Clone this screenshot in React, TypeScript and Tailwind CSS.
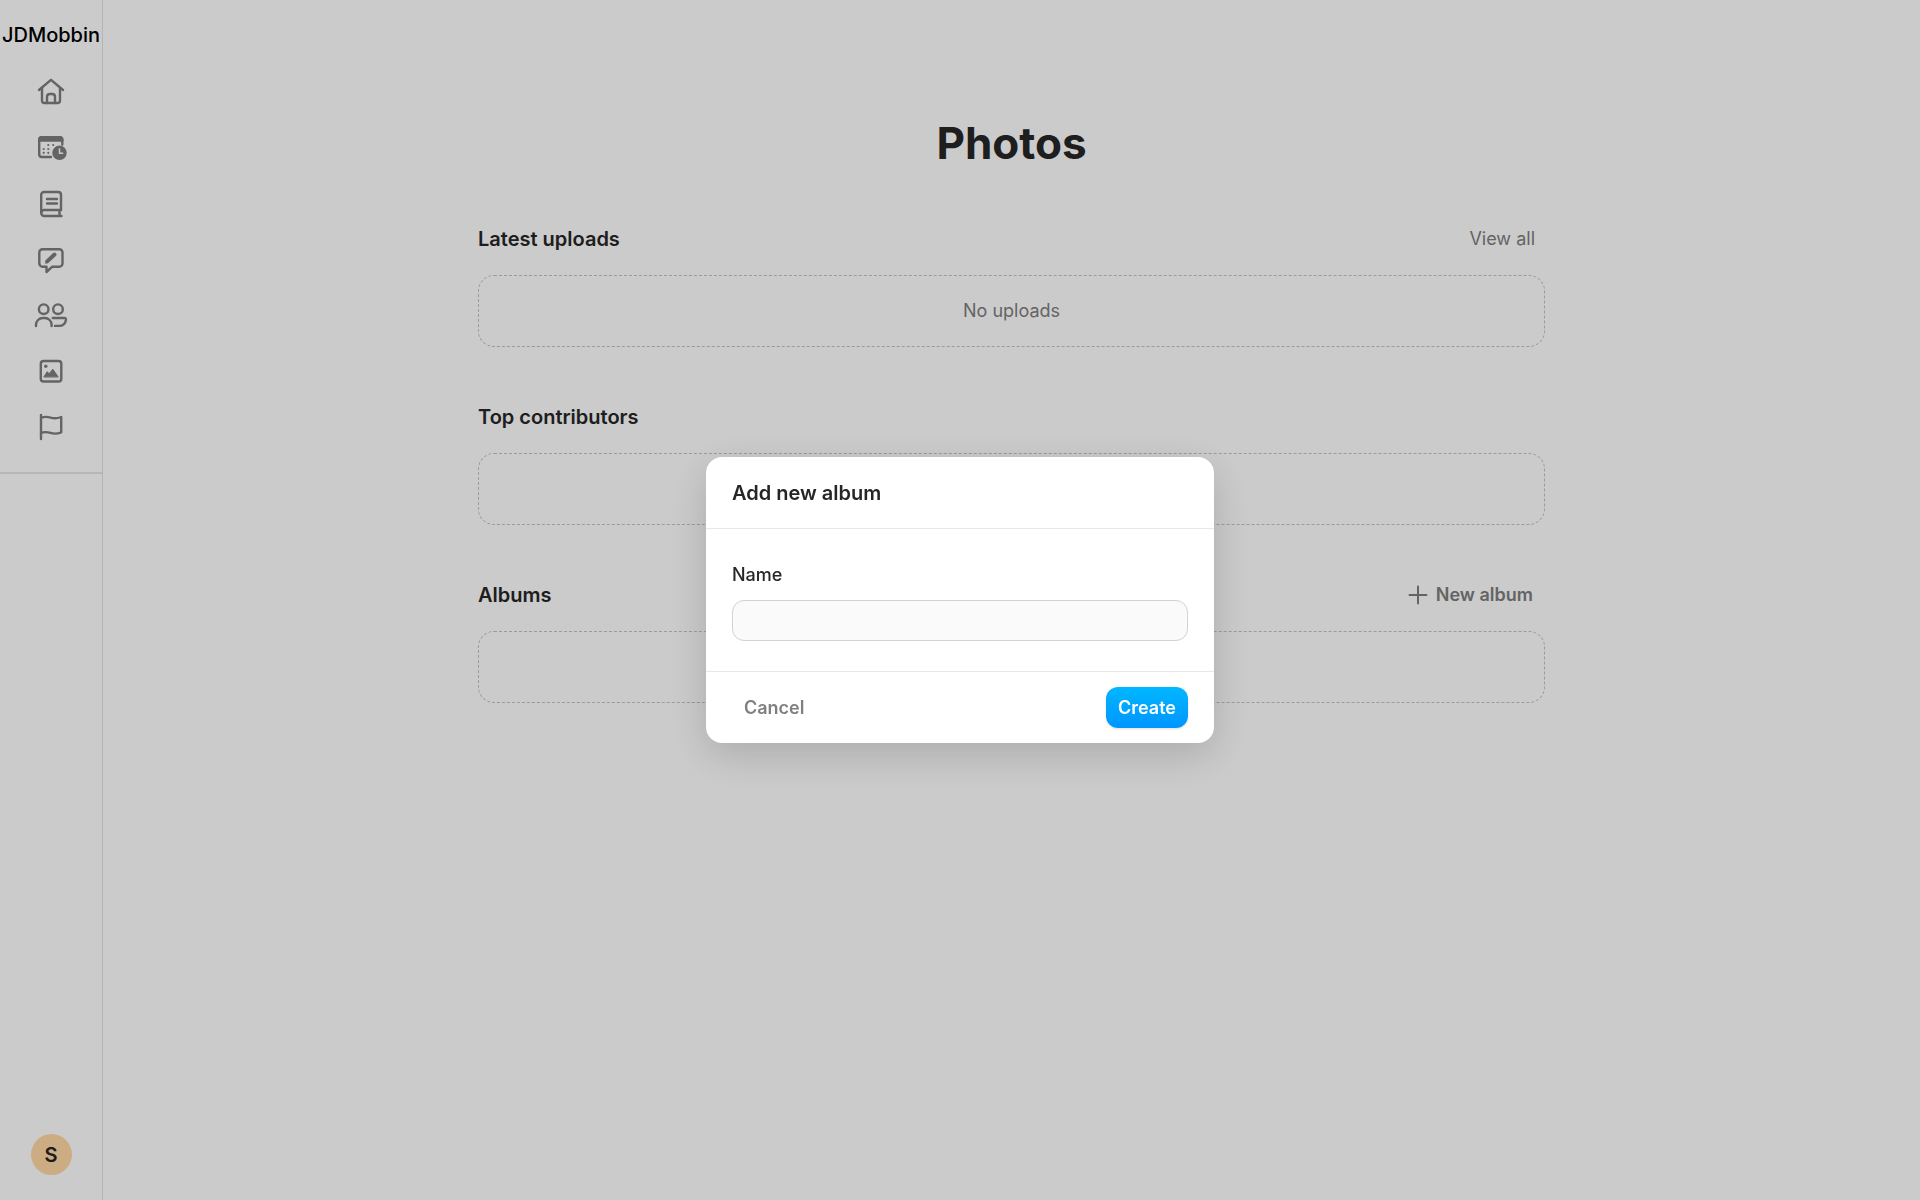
import React from "react";

interface NavItem {
  label: string;
  icon: React.ReactNode;
}

interface SectionProps {
  title: string;
  action?: React.ReactNode;
  children?: React.ReactNode;
}

const navItems: NavItem[] = [
  {
    label: "Home",
    icon: (
      <>
        <path d="M6 16 18 5.8 30 16" />
        <path d="M9 14v12.500a2.500 2.500 0 0 0 2.500 2.500h13a2.500 2.500 0 0 0 2.500-2.500V14" />
        <path d="M14 29v-6.200a2.800 2.800 0 0 1 2.800-2.800h2.400a2.800 2.800 0 0 1 2.800 2.800V29" />
      </>
    ),
  },
  {
    label: "Calendar",
    icon: (
      <>
        <path d="M18 27H9a2.800 2.800 0 0 1-2.800-2.800V10A2.800 2.800 0 0 1 9 7.200h17.500A2.800 2.800 0 0 1 29.300 10v4.500" />
        <path d="M6.200 10.500V10A2.800 2.800 0 0 1 9 7.200h17.500a2.800 2.800 0 0 1 2.800 2.800v.5z" fill="currentColor" />
        <g fill="currentColor" stroke="none">
          <circle cx="15.300" cy="15" r="1.100" />
          <circle cx="20.200" cy="15" r="1.100" />
          <circle cx="10.700" cy="19" r="1.100" />
          <circle cx="15.300" cy="19" r="1.100" />
          <circle cx="10.700" cy="22.800" r="1.100" />
          <circle cx="15.300" cy="22.800" r="1.100" />
          <circle cx="26.500" cy="22.800" r="7.200" />
        </g>
        <path d="M26.500 19v4.200h3.200" className="stroke-white" strokeWidth="1.500" />
      </>
    ),
  },
  {
    label: "Materials",
    icon: (
      <>
        <path d="M28 24V8.800A2.800 2.800 0 0 0 25.200 6H11a2.800 2.800 0 0 0-2.800 2.800V26.500" />
        <path d="M28 24H11.200a3 3 0 0 0 0 6H28.500M26.500 24v6" />
        <path d="M14 13h10M14 17.500h10" />
      </>
    ),
  },
  {
    label: "Posts",
    icon: (
      <>
        <path d="M9.500 7.200h16.800a3.200 3.200 0 0 1 3.200 3.200V21.500a3.200 3.200 0 0 1-3.200 3.200h-7L13.500 30v-5.300h-4a3.200 3.200 0 0 1-3.200-3.200V10.400a3.200 3.200 0 0 1 3.200-3.200z" />
        <path d="m14.200 19.400 7.300-6.900" strokeWidth="4" />
        <path d="m12.400 21.300 2-3 1.200 1.500z" fill="currentColor" strokeWidth="0.500" />
      </>
    ),
  },
  {
    label: "Members",
    icon: (
      <>
        <circle cx="10.700" cy="11.200" r="4.800" />
        <circle cx="25" cy="11.200" r="4.800" />
        <path d="M3 28v-1.200a6.800 6.800 0 0 1 6.800-6.800h2a6.800 6.800 0 0 1 6.800 6.800V28" />
        <path d="M19.800 20h11.700a1.500 1.500 0 0 1 1.500 1.700c-.7 4-3.300 6.200-7 6.200h-4" />
      </>
    ),
  },
  {
    label: "Photos",
    icon: (
      <>
        <rect x="7.800" y="7" width="20.500" height="20.500" rx="2.800" />
        <circle cx="12.800" cy="12.200" r="1.700" fill="currentColor" stroke="none" />
        <path d="m11 22.700 3.200-5 2 2 3.600-4.500 5.200 7.500z" fill="currentColor" strokeWidth="1" />
      </>
    ),
  },
  {
    label: "Flags",
    icon: (
      <path d="M8 29V5m0 2.800c3.500-1.300 6-1.300 9.500-.2s6 1.300 10.700-.6v15.300c-4.700 1.900-7.200 1.700-10.700.6s-6-1.300-9.500 0" />
    ),
  },
];

const Sidebar: React.FC = () => {
  return (
    <aside className="w-[103px] shrink-0 border-r border-[#e2e2e2] flex flex-col items-center">
      <p className="h-16 pt-1.5 flex items-center text-xl font-medium text-black">JDMobbin</p>
      <nav className="w-full pb-4 flex flex-col items-center border-b-2 border-[#e4e4e4]">
        {navItems.map((item) => (
          <a
            key={item.label}
            href="#"
            aria-label={item.label}
            className="size-14 flex items-center justify-center text-[#7d7d7d]"
          >
            <svg
              viewBox="0 0 36 36"
              className="size-9"
              fill="none"
              stroke="currentColor"
              strokeWidth="2.4"
              strokeLinecap="round"
              strokeLinejoin="round"
            >
              {item.icon}
            </svg>
          </a>
        ))}
      </nav>
      <button className="mt-auto mb-[25px] size-[41px] rounded-full bg-[#ffd7a4] text-xl font-semibold text-[#222]">
        S
      </button>
    </aside>
  );
};

const Section: React.FC<SectionProps> = ({ title, action, children }) => {
  return (
    <section>
      <div className="h-10 mb-4 flex items-center justify-between">
        <h2 className="text-xl font-semibold">{title}</h2>
        {action}
      </div>
      <div className="h-[72px] rounded-2xl border border-dashed border-[#c2c2c2] flex items-center justify-center text-lg text-[#7d7d7d]">
        {children}
      </div>
    </section>
  );
};

const AddAlbumDialog: React.FC = () => {
  return (
    <div className="fixed inset-0 bg-black/20 flex items-center justify-center">
      <form
        role="dialog"
        aria-labelledby="dialog-title"
        className="w-[508px] rounded-2xl bg-white shadow-[0_12px_40px_rgba(0,0,0,0.16)]"
      >
        <h2 id="dialog-title" className="h-[72px] px-[26px] flex items-center border-b border-[#e8e8e8] text-xl font-semibold">
          Add new album
        </h2>
        <div className="px-[26px] pt-8 pb-[30px] flex flex-col">
          <label htmlFor="name" className="h-7 mb-[11px] text-lg leading-7 font-medium">
            Name
          </label>
          <input
            id="name"
            type="text"
            className="h-[41px] px-3 rounded-xl border border-[#d2d2d2] bg-[#fafafa] text-lg outline-none"
          />
        </div>
        <div className="h-[72px] px-[26px] flex items-center justify-between border-t border-[#e8e8e8] text-lg font-semibold">
          <button type="button" className="h-[41px] px-3 text-[#808080]">
            Cancel
          </button>
          <button
            type="button"
            className="h-[41px] px-3 rounded-xl bg-linear-to-b from-[#00b7ff] to-[#0095ff] text-white shadow-sm"
          >
            Create
          </button>
        </div>
      </form>
    </div>
  );
};

const App: React.FC = () => {
  return (
    <div className="min-h-screen flex bg-[#fefefe] text-[#262626] font-[Inter,sans-serif]">
      <Sidebar />
      <main className="flex-1 px-6 pt-[115px]">
        <div className="max-w-[1067px] mx-auto">
          <h1 className="h-14 mb-12 text-center text-[44px] leading-14 font-bold">Photos</h1>
          <div className="flex flex-col gap-[50px]">
            <Section
              title="Latest uploads"
              action={
                <a href="#" className="px-[10px] text-lg text-[#7d7d7d]">
                  View all
                </a>
              }
            >
              No uploads
            </Section>
            <Section title="Top contributors" />
            <Section
              title="Albums"
              action={
                <button className="px-3 flex items-center gap-2 text-lg font-semibold text-[#7d7d7d]">
                  <svg viewBox="0 0 20 20" className="size-5" stroke="currentColor" strokeWidth="2" strokeLinecap="round">
                    <path d="M10 1.500v17M1.500 10h17" />
                  </svg>
                  New album
                </button>
              }
            />
          </div>
        </div>
      </main>
      <AddAlbumDialog />
    </div>
  );
};

export default App;
